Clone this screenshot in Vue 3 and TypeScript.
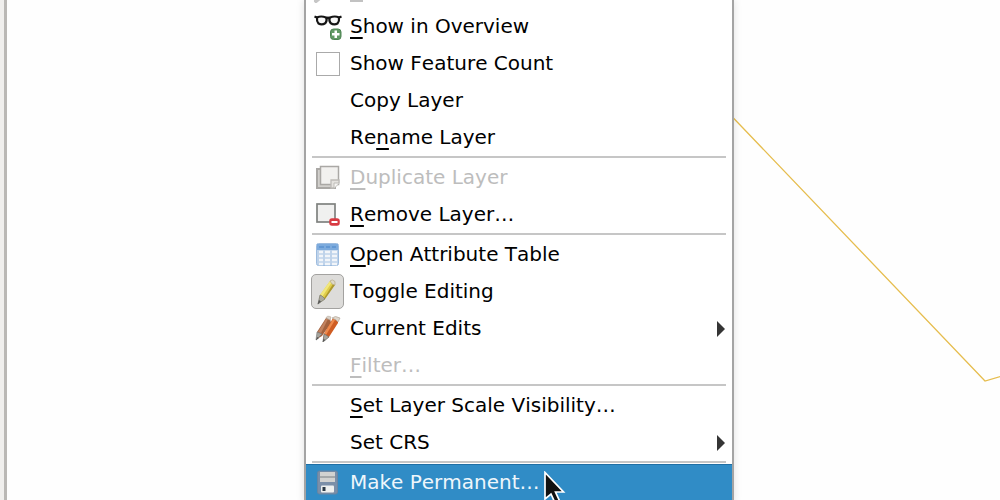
<script setup lang="ts">
import { ref } from 'vue'

interface Item {
  id: string
  label: string
  key?: number
  disabled?: boolean
  submenu?: boolean
  active?: boolean
}

const groups: Item[][] = [
  [
    { id: 'overview', label: 'Show in Overview', key: 0 },
    { id: 'count', label: 'Show Feature Count' },
    { id: 'copy', label: 'Copy Layer' },
    { id: 'rename', label: 'Rename Layer', key: 2 },
  ],
  [
    { id: 'duplicate', label: 'Duplicate Layer', key: 0, disabled: true },
    { id: 'remove', label: 'Remove Layer…', key: 0 },
  ],
  [
    { id: 'table', label: 'Open Attribute Table', key: 0 },
    { id: 'toggle', label: 'Toggle Editing' },
    { id: 'edits', label: 'Current Edits', submenu: true },
    { id: 'filter', label: 'Filter…', key: 0, disabled: true },
  ],
  [
    { id: 'scale', label: 'Set Layer Scale Visibility…', key: 0 },
    { id: 'crs', label: 'Set CRS', submenu: true },
  ],
  [{ id: 'permanent', label: 'Make Permanent…', active: true }],
]

const showCount = ref(false)
const editing = ref(true)

function before(item: Item) {
  return item.key === undefined ? item.label : item.label.slice(0, item.key)
}
function mnemonic(item: Item) {
  return item.key === undefined ? '' : item.label[item.key]
}
function after(item: Item) {
  return item.key === undefined ? '' : item.label.slice(item.key + 1)
}
function activate(item: Item) {
  if (item.id === 'toggle') editing.value = !editing.value
}
</script>

<template>
  <main class="workspace">
    <div class="splitter"></div>
    <svg class="map" aria-hidden="true">
      <path d="M720 104 L985 381 L1002 376" fill="none" stroke="#e6bd4e" stroke-width="1.3" />
    </svg>

    <div class="menu" role="menu">
      <!-- tail of the row scrolled off the top: magnifier handle and mnemonic line -->
      <svg class="scrolled" viewBox="0 0 60 8" aria-hidden="true">
        <path d="M16 -4 L10 1" stroke="#c6c6c6" stroke-width="4" stroke-linecap="round" />
        <path d="M44 1 H57" stroke="#c2c2c2" stroke-width="2" />
      </svg>
      <div v-for="(group, g) in groups" :key="g" class="group" role="group">
        <template v-for="item in group" :key="item.id">
          <label v-if="item.id === 'count'" class="row" for="feature-count">
            <span class="icon"><input id="feature-count" v-model="showCount" type="checkbox" /></span>
            <span class="text">{{ item.label }}</span>
          </label>
          <button
            v-else
            type="button"
            class="row"
            :role="item.id === 'toggle' ? 'menuitemcheckbox' : 'menuitem'"
            :class="{ active: item.active }"
            :disabled="item.disabled"
            :aria-checked="item.id === 'toggle' ? editing : undefined"
            :aria-haspopup="item.submenu ? 'menu' : undefined"
            @click="activate(item)"
          >
            <span class="icon" :class="{ pressed: item.id === 'toggle' && editing }">
              <svg v-if="item.id === 'overview'" viewBox="0 0 28 28">
                <g fill="#f8f8f8" stroke="#151515" stroke-width="2.2">
                  <path d="M3 5.500 Q7 3.500 12 5.500 Q13.500 8 11.500 11 Q8 13.500 4.500 11.500 Q2.500 9 3 5.500 Z" />
                  <path d="M25 5.500 Q21 3.500 16 5.500 Q14.500 8 16.500 11 Q20 13.500 23.500 11.500 Q25.500 9 25 5.500 Z" />
                  <path d="M.5 4.500 L4 6 M27.500 4.500 L24 6 M12 6.500 Q14 5 16 6.500" fill="none" />
                </g>
                <rect x="16.500" y="17" width="10.500" height="10.500" rx="3" fill="#629a65" stroke="#4d8352" />
                <path d="M21.750 18.500 V26 M18 22.250 H25.500" stroke="#fff" stroke-width="2.500" />
              </svg>
              <svg v-else-if="item.id === 'duplicate'" viewBox="0 0 28 28">
                <path d="M6 6 H3 V25 H21 V22" fill="#d2d0cd" stroke="#aaa8a5" stroke-width="2" />
                <rect x="6.500" y="3.500" width="18" height="18" fill="#f2f1ef" stroke="#aaa8a5" stroke-width="1.500" />
                <path d="M17 25 V17 H25 V20 L20 25 Z" fill="#e5e3df" stroke="#bdbbb7" stroke-width="1.300" />
                <path d="M20 25 V20 H25" fill="#f6f5f3" stroke="#bdbbb7" />
              </svg>
              <svg v-else-if="item.id === 'remove'" viewBox="0 0 28 28">
                <rect x="3" y="4" width="18" height="18" fill="#f0f0ef" stroke="#7f827f" stroke-width="1.700" />
                <rect x="16" y="19" width="9" height="6" rx="2" fill="#d83b43" stroke="#d83b43" stroke-width="1.500" />
                <path d="M17.500 22 H23.500" stroke="#fff" stroke-width="2" />
              </svg>
              <svg v-else-if="item.id === 'table'" viewBox="0 0 28 28">
                <rect x="2.500" y="3.500" width="22" height="22" rx="2" fill="#bfd3ea" stroke="#9dbcdf" />
                <rect x="3" y="4" width="21" height="6" fill="#7dabdd" />
                <path d="M5 7 H10 M12 7 H16 M18 7 H22" stroke="#5b93d0" stroke-width="1.500" />
                <g stroke="#f2f5f9" stroke-width="2.500">
                  <path d="M5 12 H9 M5 16 H9 M5 20 H9 M5 24 H9" />
                  <path d="M11 12 H16 M11 16 H16 M11 20 H16 M11 24 H16" />
                  <path d="M18 12 H23 M18 16 H23 M18 20 H23 M18 24 H23" />
                </g>
              </svg>
              <svg v-else-if="item.id === 'toggle'" viewBox="0 0 28 28">
                <path d="M6 18 L16 4 Q19 3 21 7 L11 22 L5 26 Z" fill="#e0cd4a" />
                <path d="M6 18 L16 4 L18 5 L8 20 Z" fill="#f1e77c" />
                <path d="M9.500 22 L19 7 L21 8 L11 22 Z" fill="#ac982f" />
                <path d="M16 4 Q18 1.500 21 4.500 L21 8 L18 7 Z" fill="#ded8c7" stroke="#b6aa88" stroke-width=".7" />
                <path d="M6 18 L8 19 L11 22 L4 27 Z" fill="#aaa99f" stroke="#77776e" stroke-width=".7" />
                <path d="M5 23 L7 24.500 L3.500 27.500 Z" fill="#555" />
              </svg>
              <svg v-else-if="item.id === 'edits'" viewBox="0 0 28 28">
                <path d="M3 18 L12 4 L16 4 L17 9 L8 22 L3 25 Z" fill="#a3623e" />
                <path d="M4 18 L12 5 L14 5 L7 19 Z" fill="#c28360" />
                <path d="M12 4 Q13 1 17 3 L16 6 Z" fill="#d8d0c8" stroke="#b3a79a" stroke-width=".6" />
                <path d="M3 18 L8 20 L2 26 Z" fill="#a5a39c" stroke="#777" stroke-width=".6" />
                <path d="M10 20 L19 4 L24 5 L24 9 L15 23 L9 27 Z" fill="#cf5d23" />
                <path d="M10 20 L19 5 L21 6 L12 21 Z" fill="#ee8a4c" />
                <path d="M18 4 Q21 1 26 4 L24 8 L22 6 Z" fill="#ded6cc" stroke="#b3a79a" stroke-width=".7" />
                <path d="M10 20 L12 21 L15 23 L9 28 Z" fill="#aaa79f" stroke="#707069" stroke-width=".7" />
                <path d="M3 23 L5 24 L2 26.500 Z M9.500 25 L11.500 26 L8.500 28 Z" fill="#555" />
              </svg>
              <svg v-else-if="item.id === 'permanent'" viewBox="0 0 28 28">
                <rect x="3.500" y="3" width="20" height="23" rx="2" fill="#7b8fa8" stroke="#6885a3" />
                <rect x="6" y="4" width="15" height="10" fill="#d2d2d0" />
                <path d="M6 9 H21" stroke="#a5a8a9" stroke-width="2" />
                <rect x="7" y="17.500" width="13" height="7" rx="1" fill="#eef0ef" />
                <rect x="8.500" y="19" width="3" height="4" fill="#2c3a47" />
              </svg>
            </span>
            <span class="text">{{ before(item) }}<u v-if="mnemonic(item)">{{ mnemonic(item) }}</u>{{ after(item) }}</span>
            <svg v-if="item.submenu" class="arrow" viewBox="0 0 9 16" aria-hidden="true">
              <path d="M1 0 L9 8 L1 16 Z" fill="#353535" />
            </svg>
          </button>
        </template>
      </div>
    </div>

    <svg class="pointer" viewBox="0 0 24 36" aria-hidden="true">
      <path d="M2 1.500 V28 L8 23 L13 34 L17.500 32 L12.500 21 H20.500 Z" fill="#111" stroke="#fff" stroke-width="1.700" />
    </svg>
  </main>
</template>

<style>
body {
  margin: 0;
  background: #fefefe;
}
</style>

<style scoped>
.workspace {
  position: relative;
  height: 100vh;
  overflow: hidden;
  background: #fefefe;
  font-family: "DejaVu Sans", sans-serif;
  font-size: 20px;
  font-kerning: none;
  color: #000;
}
.splitter {
  box-sizing: border-box;
  width: 7px;
  height: 100%;
  background: #f0efed;
  border-right: 3px solid #bab8b5;
}
.map {
  position: absolute;
  inset: 0;
  width: 100%;
  height: 100%;
}
.menu {
  position: absolute;
  top: 0;
  left: 304px;
  box-sizing: border-box;
  width: 430px;
  background: #fff;
  border: 2px solid #a4a4a4;
  border-top: 0;
  box-shadow: 0 0 8px rgba(0, 0, 0, 0.12);
}
.scrolled {
  display: block;
  width: 60px;
  height: 8px;
}
.group + .group::before {
  content: "";
  display: block;
  height: 2px;
  margin: 0 6px 1px;
  background: #c6c6c6;
}
.row {
  box-sizing: border-box;
  display: flex;
  align-items: center;
  width: 100%;
  height: 37px;
  margin: 0;
  padding: 0 7px 0 5px;
  border: 0;
  background: none;
  color: inherit;
  font: inherit;
  font-kerning: inherit;
  text-align: left;
  white-space: nowrap;
}
.row:disabled {
  color: #bdbdbd;
}
.row.active {
  background: #308cc6;
  color: #eef6fb;
  border-top: 1px solid #1f6fa5;
  border-bottom: 1px solid #1f6fa5;
}
.icon {
  box-sizing: border-box;
  display: flex;
  flex: none;
  align-items: center;
  justify-content: center;
  width: 33px;
  height: 35px;
  margin-right: 6px;
  border: 1px solid transparent;
  border-radius: 5px;
}
.icon.pressed {
  background: #dddcda;
  border-color: #a3a2a0;
}
.icon svg {
  flex: none;
  width: 28px;
  height: 28px;
  margin-bottom: 2px;
}
.icon input {
  appearance: none;
  box-sizing: border-box;
  width: 24px;
  height: 24px;
  margin: 0;
  background: #fff;
  border: 1px solid #aaa;
}
.icon input:checked {
  background: #308cc6;
}
.text {
  flex: 1;
  padding-bottom: 2px;
  line-height: 24px;
}
u {
  text-decoration-thickness: 2px;
  text-underline-offset: 4px;
  text-decoration-skip-ink: none;
}
.arrow {
  flex: none;
  width: 9px;
  height: 16px;
}
.pointer {
  position: absolute;
  top: 471px;
  left: 543px;
  width: 24px;
  height: 36px;
}
</style>
